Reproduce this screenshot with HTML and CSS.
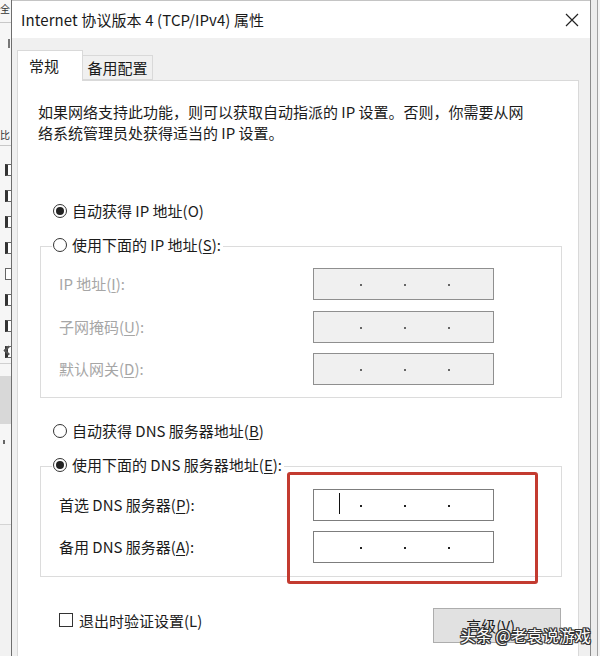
FILE: index.html
```html
<!DOCTYPE html>
<html lang="zh-CN">
<head>
<meta charset="utf-8">
<title>Internet 协议版本 4 (TCP/IPv4) 属性</title>
<link rel="stylesheet" href="styles.css">
</head>
<body>
<div class="screen">
  <aside class="bg-left">
    <div class="bl-char">全</div>
    <div class="bl-line"></div>
    <div class="bl-cursor"></div>
    <div class="bl-gap1"></div>
    <div class="bl-char bl-char2">比</div>
    <div class="bl-line"></div>
    <div class="bl-boxes">
      <span class="bl-box on"></span>
      <span class="bl-box on"></span>
      <span class="bl-box on"></span>
      <span class="bl-box on"></span>
      <span class="bl-box"></span>
      <span class="bl-box on"></span>
      <span class="bl-box on"></span>
      <span class="bl-box on"></span>
    </div>
    <div class="bl-arrow"></div>
    <div class="bl-band"></div>
    <div class="bl-dot"></div>
    <div class="bl-rest"></div>
  </aside>

  <section class="dialog">
    <header class="titlebar">
      <span class="title">Internet 协议版本 4 (TCP/IPv4) 属性</span>
      <svg class="close" width="14" height="14" viewBox="0 0 14 14" aria-hidden="true">
        <path d="M1 1 L13 13 M13 1 L1 13" stroke="#222" stroke-width="1.2" fill="none"/>
      </svg>
    </header>

    <div class="dlg-body">
      <nav class="tabs">
        <div class="tab active">常规</div>
        <div class="tab">备用配置</div>
      </nav>

      <div class="panel">
        <p class="intro">如果网络支持此功能，则可以获取自动指派的 IP 设置。否则，你需要从网<br>络系统管理员处获得适当的 IP 设置。</p>

        <div class="radio-row first">
          <span class="radio checked"></span>
          <span>自动获得 IP 地址(O)</span>
        </div>

        <div class="group">
          <div class="legend radio-row">
            <span class="radio"></span>
            <span>使用下面的 IP 地址(<u>S</u>):</span>
          </div>
          <div class="fields">
            <label class="lbl disabled">IP 地址(<u>I</u>):</label>
            <div class="ipbox disabled"><i></i><i></i><i></i></div>
            <label class="lbl disabled">子网掩码(<u>U</u>):</label>
            <div class="ipbox disabled"><i></i><i></i><i></i></div>
            <label class="lbl disabled">默认网关(<u>D</u>):</label>
            <div class="ipbox disabled"><i></i><i></i><i></i></div>
          </div>
        </div>

        <div class="radio-row dns-auto">
          <span class="radio"></span>
          <span>自动获得 DNS 服务器地址(<u>B</u>)</span>
        </div>

        <div class="group group-dns">
          <div class="legend radio-row">
            <span class="radio checked"></span>
            <span>使用下面的 DNS 服务器地址(<u>E</u>):</span>
          </div>
          <div class="fields dns-fields">
            <label class="lbl">首选 DNS 服务器(<u>P</u>):</label>
            <div class="ipbox"><b class="caret"></b><i></i><i></i><i></i></div>
            <label class="lbl">备用 DNS 服务器(<u>A</u>):</label>
            <div class="ipbox"><i></i><i></i><i></i></div>
          </div>
        </div>

        <div class="bottom-row">
          <div class="check-row">
            <span class="checkbox"></span>
            <span>退出时验证设置(L)</span>
          </div>
          <button class="btn">高级(<u>V</u>)...</button>
        </div>
      </div>
    </div>
  </section>

  <aside class="bg-right"></aside>

  <div class="annot"></div>
  <div class="watermark">头条 @老袁说游戏</div>
</div>
</body>
</html>
```

FILE: styles.css
```css
* { box-sizing: border-box; }

html, body {
  margin: 0;
  padding: 0;
}

body {
  width: 600px;
  height: 656px;
  overflow: hidden;
  background: #f3f3f3;
  font-family: "Noto Sans CJK SC", "Noto Sans", sans-serif;
  font-size: 15px;
  color: #1b1b1b;
}

.screen {
  position: relative;
  display: flex;
  width: 600px;
  height: 656px;
  overflow: hidden;
}

/* ---------- background window on the left ---------- */
.bg-left {
  width: 11px;
  flex: none;
  display: flex;
  flex-direction: column;
  background: #f6f6f6;
  overflow: hidden;
}

.bl-char {
  height: 22px;
  flex: none;
  font-size: 10px;
  line-height: 18px;
  color: #333;
}

.bl-char2 {
  height: 20px;
  line-height: 20px;
}

.bl-line {
  height: 1px;
  background: #c8c8c8;
  flex: none;
}

.bl-cursor {
  height: 40px;
  flex: none;
}

.bl-cursor::after {
  content: "";
  display: block;
  width: 2px;
  height: 9px;
  margin: 16px 0 0 8px;
  background: #777;
}

.bl-gap1 {
  height: 62px;
  flex: none;
}

.bl-boxes {
  display: flex;
  flex-direction: column;
  gap: 14px;
  padding-top: 18px;
  padding-left: 5px;
  height: 218px;
  flex: none;
  border-bottom: 1px solid #d0d0d0;
}

.bl-box {
  display: block;
  width: 8px;
  height: 12px;
  border: 1px solid #666;
  background: #fff;
  flex: none;
}

.bl-box.on {
  border-left: 3px solid #333;
}

.bl-arrow {
  height: 20px;
  flex: none;
  margin-top: -24px;
}

.bl-arrow::after {
  content: "";
  display: block;
  width: 5px;
  height: 5px;
  margin: 7px 0 0 5px;
  border-left: 2px solid #555;
  border-bottom: 2px solid #555;
  transform: rotate(45deg);
}

.bl-band {
  height: 48px;
  margin-top: 16px;
  background: #d8d8d8;
  flex: none;
}

.bl-dot {
  height: 30px;
  flex: none;
}

.bl-dot::after {
  content: "";
  display: block;
  width: 2px;
  height: 4px;
  margin: 16px 0 0 3px;
  background: #666;
}

.bl-rest {
  flex: 1;
  border-top: 1px solid #d4d4d4;
  margin-top: 70px;
  background: #f2f2f2;
}

/* ---------- dialog ---------- */
.dialog {
  width: 580px;
  flex: none;
  display: flex;
  flex-direction: column;
  border-left: 1px solid #6e6e6e;
  border-right: 1px solid #8a8a8a;
  background: #f0f0f0;
}

.titlebar {
  height: 38px;
  flex: none;
  display: flex;
  align-items: center;
  justify-content: space-between;
  padding: 0 11px 0 9px;
  background: #fff;
  border-top: 1px solid #c4c4c4;
}

.title {
  font-size: 15px;
  color: #1a1a1a;
  letter-spacing: 0.1px;
}

.close {
  display: block;
  width: 14px;
  height: 14px;
}

.dlg-body {
  flex: 1;
  display: flex;
  flex-direction: column;
  padding: 12px 11px 0 5px;
}

.tabs {
  display: flex;
  align-items: flex-end;
  height: 30px;
  flex: none;
  position: relative;
  z-index: 1;
}

.tab {
  height: 25px;
  width: 70px;
  display: flex;
  align-items: center;
  justify-content: center;
  border: 1px solid #d9d9d9;
  border-left: none;
  background: #f0f0f0;
  font-size: 15px;
  line-height: 20px;
}

.tab.active {
  height: 31px;
  width: 66px;
  justify-content: flex-start;
  padding-left: 11px;
  border-left: 1px solid #d9d9d9;
  border-bottom: none;
  background: #fff;
  margin-bottom: -1px;
}

.panel {
  flex: 1;
  background: #fff;
  border: 1px solid #d9d9d9;
  border-bottom: none;
  padding: 20px 16px 0 20px;
}

.intro {
  margin: 0;
  line-height: 21px;
  font-size: 15px;
  white-space: nowrap;
}

/* ---------- radio rows ---------- */
.radio-row {
  display: flex;
  align-items: center;
  gap: 5px;
  height: 22px;
  line-height: 22px;
  white-space: nowrap;
}

.radio-row.first {
  margin-top: 57px;
  margin-left: 15px;
}

.radio-row.dns-auto {
  margin-top: 22px;
  margin-left: 15px;
}

.radio {
  width: 14px;
  height: 14px;
  flex: none;
  border: 1px solid #333;
  border-radius: 50%;
  background: #fff;
  display: flex;
  align-items: center;
  justify-content: center;
}

.radio.checked::after {
  content: "";
  width: 8px;
  height: 8px;
  border-radius: 50%;
  background: #222;
}

u {
  text-decoration: underline;
  text-underline-offset: 2px;
  text-decoration-thickness: 1px;
}

/* ---------- groups ---------- */
.group {
  margin: 24px 0 0 2px;
  border: 1px solid #dcdcdc;
  padding: 0 0 12px 18px;
}

.group-dns {
  padding-bottom: 13px;
}

.legend {
  width: fit-content;
  margin: -13px 0 0 -7px;
  padding: 0 2px 0 1px;
  background: #fff;
}

.fields {
  display: grid;
  grid-template-columns: 254px 181px;
  row-gap: 10.5px;
  margin-top: 12px;
  align-items: center;
}

.dns-fields {
  row-gap: 10px;
  margin-top: 13px;
}

.lbl {
  white-space: nowrap;
  line-height: 20px;
}

.lbl.disabled {
  color: #a6a6a6;
}

.ipbox {
  position: relative;
  height: 32px;
  border: 1px solid #7d7d7d;
  background: #fff;
  display: flex;
  align-items: center;
  gap: 42px;
  padding-left: 46px;
}

.ipbox.disabled {
  background: #f0f0f0;
  border-color: #8f8f8f;
}

.ipbox i {
  display: block;
  width: 2px;
  height: 2px;
  background: #222;
  margin-top: 2px;
}

.ipbox.disabled i {
  background: #666;
}

.caret {
  position: absolute;
  left: 25px;
  top: 3px;
  width: 1px;
  height: 21px;
  background: #111;
}

/* ---------- bottom row ---------- */
.bottom-row {
  display: flex;
  justify-content: space-between;
  align-items: flex-start;
  margin: 31px 1px 0 21px;
}

.check-row {
  display: flex;
  align-items: center;
  gap: 6px;
  height: 22px;
  margin-top: 1px;
  white-space: nowrap;
}

.checkbox {
  width: 14px;
  height: 14px;
  border: 1px solid #333;
  background: #fff;
  flex: none;
}

.btn {
  width: 128px;
  height: 35px;
  border: 1px solid #adadad;
  background: #e1e1e1;
  font-family: "Noto Sans CJK SC", "Noto Sans", sans-serif;
  font-size: 15px;
  color: #1b1b1b;
  padding: 0;
}

/* ---------- background window on the right ---------- */
.bg-right {
  flex: 1;
  background: #ececec;
  border-right: 1px solid #a0a0a0;
  margin-right: 2px;
}

/* ---------- overlays ---------- */
.annot {
  position: absolute;
  left: 287px;
  top: 472px;
  width: 251px;
  height: 112px;
  border: 3px solid #c33b30;
  border-radius: 3px;
}

.watermark {
  position: absolute;
  left: 460px;
  top: 624px;
  font-size: 16px;
  line-height: 22px;
  color: #fff;
  white-space: nowrap;
  text-shadow:
    1px 0 0 #333, -1px 0 0 #333, 0 1px 0 #333, 0 -1px 0 #333,
    1px 1px 0 #333, -1px -1px 0 #333, 1px -1px 0 #333, -1px 1px 0 #333;
}
```
